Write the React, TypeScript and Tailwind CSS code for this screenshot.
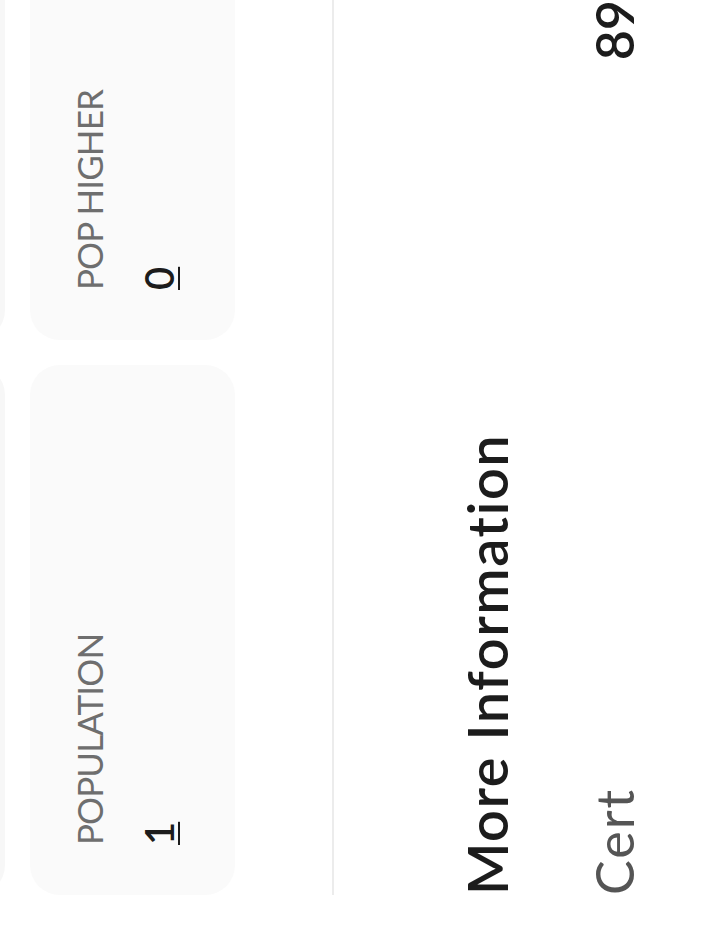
import React from "react"

const stats = [
  { label: "POPULATION", value: "1" },
  { label: "POP HIGHER", value: "0" },
]

const font = { fontFamily: "Lato, 'Open Sans', sans-serif" }

function StatCard({ label, value }: { label: string; value: string }) {
  return (
    <div className="flex-none w-[530px] h-[205px] rounded-[30px] bg-[#fafafa] pl-[50px] pt-[42px]">
      <div className="text-[35px] leading-none tracking-[-0.9px] text-[#6e6e6e]">{label}</div>
      <div className="mt-[32px] text-[40px] leading-none font-semibold text-[#1c1c1c] underline decoration-2 underline-offset-[4px]">
        {value}
      </div>
    </div>
  )
}

export default function App() {
  return (
    <div className="w-[710px] h-[944px] overflow-hidden bg-white" style={font}>
      <div className="w-[944px] h-[710px] overflow-hidden bg-white origin-top-left [transform:translateY(944px)_rotate(-90deg)]">
        <div className="pl-[49px]">
          {/* row scrolled off the top */}
          <div className="flex gap-[25px] -mt-[200px]">
            <div className="flex-none w-[530px] h-[205px] rounded-[30px] bg-[#f7f7f7]" />
            <div className="flex-none w-[530px] h-[205px] rounded-[30px] bg-[#f7f7f7]" />
          </div>
          <div className="flex gap-[25px] mt-[25px]">
            {stats.map((s) => (
              <StatCard key={s.label} label={s.label} value={s.value} />
            ))}
          </div>
          <div className="mt-[97px] h-[2px] bg-[#ececec]" />
          <h2 className="mt-[125px] text-[56px] leading-none font-semibold tracking-[1.5px] text-[#1c1c1c]">More Information</h2>
          <div className="mt-[73px] flex items-start justify-between">
            <span className="text-[52px] leading-none tracking-[2px] text-[#555555]">Cert</span>
            <span className="text-[52px] leading-none font-semibold text-[#1c1c1c]">89</span>
          </div>
        </div>
      </div>
    </div>
  )
}
